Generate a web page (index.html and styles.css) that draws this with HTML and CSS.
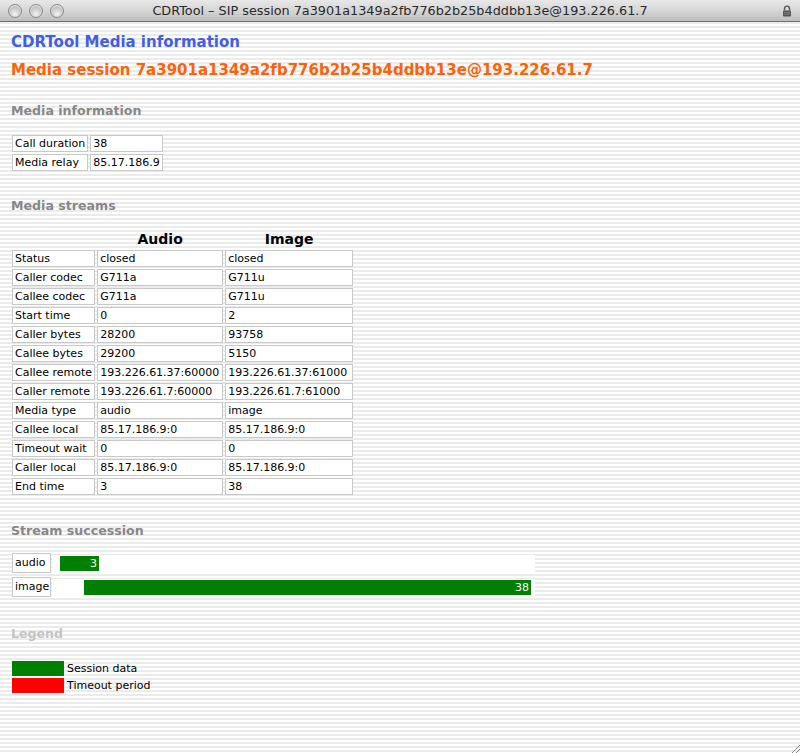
FILE: index.html
```html
<!DOCTYPE html>
<html>
<head>
<meta charset="utf-8">
<link rel="stylesheet" href="styles.css">
</head>
<body>
<div class="window">
  <div class="titlebar">
    <div class="lights"><span class="light"></span><span class="light"></span><span class="light"></span></div>
    <div class="wtitle">CDRTool – SIP session 7a3901a1349a2fb776b2b25b4ddbb13e@193.226.61.7</div>
    <div class="tright">
      <svg class="lock" width="10" height="12" viewBox="0 0 10 12">
        <path d="M2.5 5.5V3.6a2.5 2.5 0 0 1 5 0v1.9" fill="none" stroke="#555" stroke-width="1.4"/>
        <rect x="1" y="5.5" width="8" height="6" rx="0.8" fill="#555"/>
        <rect x="1.8" y="7" width="6.4" height="0.8" fill="#888"/>
        <rect x="1.8" y="8.8" width="6.4" height="0.8" fill="#888"/>
      </svg>
    </div>
  </div>
  <div class="content">
    <h1 class="apptitle">CDRTool Media information</h1>
    <h2 class="session">Media session 7a3901a1349a2fb776b2b25b4ddbb13e@193.226.61.7</h2>

    <h3 class="section">Media information</h3>
    <table class="grid info">
      <tr><td>Call duration</td><td class="v">38</td></tr>
      <tr><td>Media relay</td><td class="v">85.17.186.9</td></tr>
    </table>

    <h3 class="section">Media streams</h3>
    <table class="grid streams">
      <thead><tr><th class="blank"></th><th>Audio</th><th>Image</th></tr></thead>
      <tbody>
      <tr><td>Status</td><td>closed</td><td>closed</td></tr>
      <tr><td>Caller codec</td><td>G711a</td><td>G711u</td></tr>
      <tr><td>Callee codec</td><td>G711a</td><td>G711u</td></tr>
      <tr><td>Start time</td><td>0</td><td>2</td></tr>
      <tr><td>Caller bytes</td><td>28200</td><td>93758</td></tr>
      <tr><td>Callee bytes</td><td>29200</td><td>5150</td></tr>
      <tr><td>Callee remote</td><td>193.226.61.37:60000</td><td>193.226.61.37:61000</td></tr>
      <tr><td>Caller remote</td><td>193.226.61.7:60000</td><td>193.226.61.7:61000</td></tr>
      <tr><td>Media type</td><td>audio</td><td>image</td></tr>
      <tr><td>Callee local</td><td>85.17.186.9:0</td><td>85.17.186.9:0</td></tr>
      <tr><td>Timeout wait</td><td>0</td><td>0</td></tr>
      <tr><td>Caller local</td><td>85.17.186.9:0</td><td>85.17.186.9:0</td></tr>
      <tr><td>End time</td><td>3</td><td>38</td></tr>
      </tbody>
    </table>

    <h3 class="section">Stream succession</h3>
    <div class="succession">
      <div class="srow">
        <div class="slabel">audio</div>
        <div class="track"><div class="bar" style="margin-left:8px;width:39px">3</div></div>
      </div>
      <div class="srow">
        <div class="slabel">image</div>
        <div class="track"><div class="bar" style="margin-left:32px;width:447px">38</div></div>
      </div>
    </div>

    <h3 class="section legend-title">Legend</h3>
    <div class="legend">
      <div class="litem"><span class="swatch green"></span><span>Session data</span></div>
      <div class="litem"><span class="swatch red"></span><span>Timeout period</span></div>
    </div>
  </div>
  <div class="grip"></div>
</div>
</body>
</html>
```

FILE: styles.css
```css
html, body {
  margin: 0;
  padding: 0;
}
body {
  width: 800px;
  height: 753px;
  overflow: hidden;
  font-family: "DejaVu Sans", Verdana, sans-serif;
}
.window {
  position: relative;
  width: 800px;
  height: 753px;
  display: flex;
  flex-direction: column;
  background: repeating-linear-gradient(to bottom, #ffffff 0, #ffffff 2px, #ebebeb 2px, #ebebeb 4px);
}
.titlebar {
  height: 21px;
  flex: none;
  display: grid;
  grid-template-columns: 1fr auto 1fr;
  align-items: center;
  background: linear-gradient(to bottom, #e8e8e8 0%, #d6d6d6 50%, #bdbdbd 100%);
  border-bottom: 1px solid #6e6e6e;
}
.lights {
  display: flex;
  gap: 7px;
  padding-left: 8px;
}
.light {
  width: 12px;
  height: 12px;
  border-radius: 50%;
  border: 1px solid #8a8a8a;
  background: radial-gradient(circle at 50% 75%, #f4f4f4 0%, #cfcfcf 45%, #a7a7a7 100%);
  box-shadow: inset 0 1px 1px rgba(255,255,255,0.8);
}
.wtitle {
  text-align: center;
  font-family: "DejaVu Sans", sans-serif;
  font-size: 12.8px;
  color: #2a2a2a;
  white-space: nowrap;
}
.tright {
  display: flex;
  justify-content: flex-end;
  padding-right: 8px;
}
.lock {
  display: block;
}
.content {
  display: flex;
  flex-direction: column;
  align-items: flex-start;
  padding: 0 0 0 11px;
}
.apptitle {
  margin: 11px 0 0 0;
  font-size: 15px;
  line-height: 18px;
  font-weight: bold;
  color: #3f5fe4;
}
.session {
  margin: 10px 0 0 0;
  font-size: 15px;
  line-height: 18px;
  font-weight: bold;
  color: #ff6108;
}
.section {
  margin: 24px 0 14px 0;
  font-size: 12.6px;
  line-height: 16px;
  font-weight: bold;
  color: #878787;
}
.grid {
  border-collapse: separate;
  border-spacing: 2px;
  margin-left: -1px;
  margin-bottom: 1px;
  font-size: 11px;
  color: #000;
}
.grid.streams {
  margin-bottom: 2px;
}
.grid td {
  background: #ffffff;
  border: 1px solid #c8c8c8;
  padding: 0 2px;
  height: 15px;
  line-height: 15px;
  white-space: nowrap;
}
.info td:first-child { width: 70px; }
.info td.v { width: 65px; }
.streams th {
  font-size: 14px;
  font-weight: bold;
  line-height: 18px;
  text-align: center;
  padding: 0;
}
.streams td:first-child { width: 77px; }
.streams td:nth-child(2) { width: 120px; }
.streams td:nth-child(3) { width: 122px; }
.succession {
  display: flex;
  flex-direction: column;
  gap: 4px;
  margin-left: 1px;
  margin-bottom: 5px;
  font-size: 11px;
}
.srow {
  display: flex;
  align-items: center;
  gap: 1px;
}
.slabel {
  width: 33px;
  height: 18px;
  line-height: 18px;
  padding: 0 2px;
  border: 1px solid #c8c8c8;
  background: #fff;
}
.track {
  width: 483px;
  height: 17px;
  background: #fff;
  display: flex;
  align-items: center;
}
.bar {
  box-sizing: border-box;
  height: 15px;
  line-height: 15px;
  background: #008000;
  color: #fff;
  text-align: right;
  padding-right: 2px;
  font-size: 11px;
}
.legend-title {
  color: #c4c4c4;
  margin-bottom: 19px;
}
.legend {
  display: flex;
  flex-direction: column;
  gap: 2px;
  margin-left: 1px;
  font-size: 11px;
}
.litem {
  display: flex;
  align-items: center;
  gap: 3px;
}
.swatch {
  width: 52px;
  height: 15px;
}
.swatch.green { background: #008000; }
.swatch.red { background: #ff0000; }
.grip {
  position: absolute;
  right: 0;
  bottom: 0;
  width: 10px;
  height: 10px;
  background: repeating-linear-gradient(135deg, transparent 0, transparent 2px, #888 2px, #888 3px);
  clip-path: polygon(100% 0, 100% 100%, 0 100%);
}
```
